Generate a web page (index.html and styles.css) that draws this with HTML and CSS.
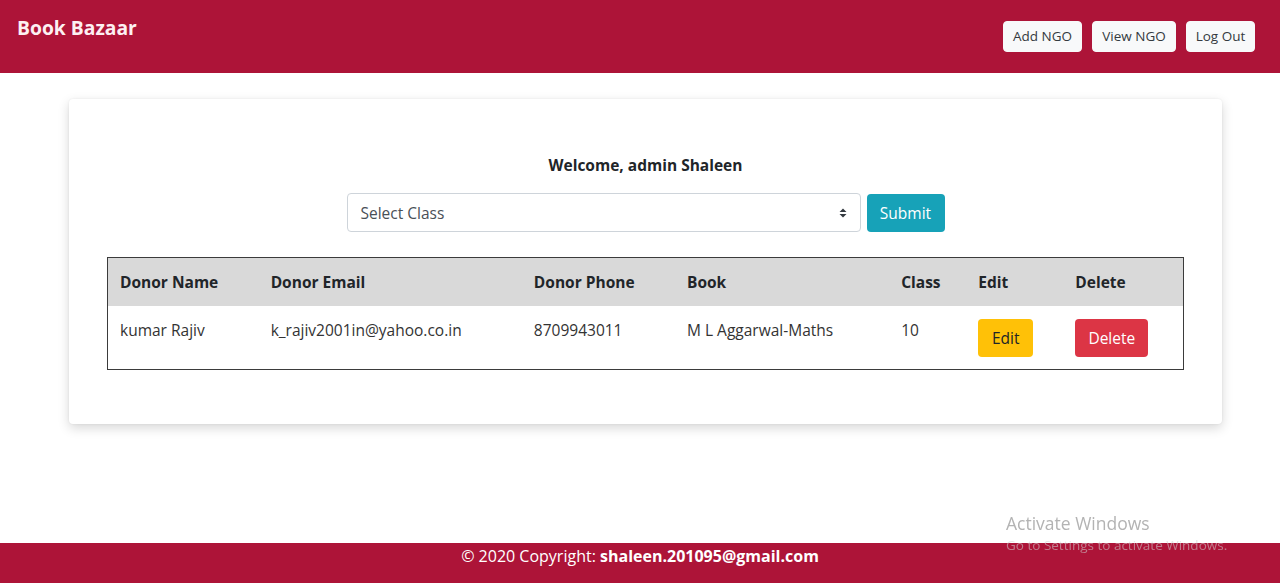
FILE: index.html
```html
<!DOCTYPE html>
<html lang="en">
<head>
<meta charset="utf-8">
<title>Book Bazaar</title>
<link rel="stylesheet" href="styles.css">
</head>
<body>
<header class="navbar">
  <a class="brand" href="#">Book Bazaar</a>
  <nav class="nav-actions">
    <button class="btn btn-light btn-sm">Add NGO</button>
    <button class="btn btn-light btn-sm">View NGO</button>
    <button class="btn btn-light btn-sm">Log Out</button>
  </nav>
</header>

<main class="card">
  <h6 class="welcome">Welcome, admin Shaleen</h6>
  <form class="filter">
    <div class="select">
      <span>Select Class</span>
      <svg class="caret" width="8" height="10" viewBox="0 0 8 10"><path d="M4 0.5 L7.5 4 H0.5 Z M4 9.5 L0.5 6 H7.5 Z" fill="#343a40"/></svg>
    </div>
    <button type="button" class="btn btn-info">Submit</button>
  </form>

  <table class="donors">
    <colgroup>
      <col class="c1"><col class="c2"><col class="c3"><col class="c4"><col class="c5"><col class="c6"><col class="c7">
    </colgroup>
    <thead>
      <tr><th>Donor Name</th><th>Donor Email</th><th>Donor Phone</th><th>Book</th><th>Class</th><th>Edit</th><th>Delete</th></tr>
    </thead>
    <tbody>
      <tr>
        <td>kumar Rajiv</td>
        <td>k_rajiv2001in@yahoo.co.in</td>
        <td>8709943011</td>
        <td>M L Aggarwal-Maths</td>
        <td>10</td>
        <td><button class="btn btn-warning">Edit</button></td>
        <td><button class="btn btn-danger">Delete</button></td>
      </tr>
    </tbody>
  </table>
</main>

<footer class="footer">
  © 2020 Copyright: <strong>shaleen.201095@gmail.com</strong>
</footer>

<div class="watermark">
  <div class="wm-title">Activate Windows</div>
  <div class="wm-sub">Go to Settings to activate Windows.</div>
</div>
</body>
</html>
```

FILE: styles.css
```css
* { box-sizing: border-box; }
html, body { height: 100%; }
body {
  margin: 0;
  font-family: "Open Sans", "Noto Sans", sans-serif;
  font-size: 15.5px;
  color: #212529;
  background: #fff;
  display: flex;
  flex-direction: column;
  min-height: 100vh;
}
.navbar {
  height: 73px;
  background: #ad1438;
  display: flex;
  justify-content: space-between;
  align-items: flex-start;
  padding: 0 25px 0 17px;
}
.brand {
  color: #fdf0f3;
  font-weight: 700;
  font-size: 19.3px;
  text-decoration: none;
  margin-top: 15px;
  line-height: 26px;
}
.nav-actions {
  display: flex;
  gap: 10px;
  margin-top: 21px;
}
.btn {
  font-family: inherit;
  border: 1px solid transparent;
  border-radius: 4px;
  font-size: 15.5px;
  line-height: 24px;
  padding: 6px 12px;
  cursor: pointer;
}
.btn-sm {
  font-size: 13.5px;
  line-height: 21px;
  padding: 4px 0;
}
.btn-light { background: #f8f9fa; color: #343a40; border-color: #f8f9fa; }
.nav-actions .btn:nth-child(1) { width: 79px; }
.nav-actions .btn:nth-child(2) { width: 84px; }
.nav-actions .btn:nth-child(3) { width: 69px; }
.btn-info { background: #17a2b8; color: #fff; width: 78px; padding: 6px 0; }
.btn-warning { background: #ffc107; color: #212529; width: 55px; padding: 6px 0; }
.btn-danger { background: #dc3545; color: #fff; width: 73px; padding: 6px 0; }

.card {
  margin: 26px 58px 0 69px;
  background: #fff;
  border-radius: 4px;
  box-shadow: 0 4px 12px rgba(0,0,0,0.16), 0 0 2px rgba(0,0,0,0.08);
  padding: 54px 38px 54px;
}
.welcome {
  margin: 0;
  text-align: center;
  font-size: 15.5px;
  font-weight: 700;
  line-height: 24px;
}
.filter {
  display: flex;
  justify-content: center;
  gap: 6px;
  margin: 16px 0 25px;
}
.select {
  width: 514px;
  height: 39px;
  border: 1px solid #ced4da;
  border-radius: 4px;
  display: flex;
  align-items: center;
  justify-content: space-between;
  padding: 0 13px 0 13px;
  color: #495057;
  font-size: 15.5px;
}
.filter .btn-info { height: 38px; margin-top: 1px; }

.donors {
  width: 100%;
  border-collapse: collapse;
  table-layout: fixed;
  border: 1px solid #3b3b3b;
}
.c1 { width: 151px; }
.c2 { width: 263px; }
.c3 { width: 153px; }
.c4 { width: 214px; }
.c5 { width: 77px; }
.c6 { width: 97px; }
.c7 { width: 120px; }
.donors th, .donors td {
  text-align: left;
  vertical-align: top;
  padding: 12px 12px;
  line-height: 24px;
  font-size: 15.5px;
}
.donors th { background: #d9d9d9; font-weight: 700; }
.donors td { color: #333; }
.donors td .btn { margin-top: 1px; }

.footer {
  margin-top: auto;
  height: 40px;
  background: #ad1438;
  color: #fff;
  text-align: center;
  line-height: 26px;
  font-size: 16px;
}
.footer strong { font-weight: 700; }

.watermark {
  position: fixed;
  left: 1006px;
  top: 512px;
  pointer-events: none;
}
.wm-title { color: #b3b3b3; font-size: 17.5px; line-height: 22px; }
.wm-sub { color: rgba(210,210,210,0.55); font-size: 13.5px; line-height: 20px; margin-top: 1px; }
```
